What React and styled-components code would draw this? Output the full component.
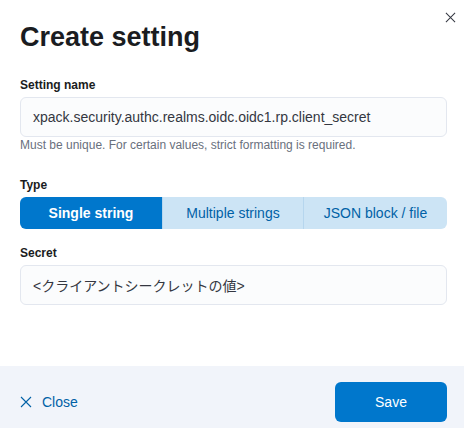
import React, { useState } from "react";
import styled, { createGlobalStyle, css } from "styled-components";

const GlobalStyle = createGlobalStyle`
  html, body {
    margin: 0;
    padding: 0;
    background: #ffffff;
    font-family: "Liberation Sans", Arial, "Noto Sans CJK JP", sans-serif;
    color: #1a1c21;
  }
  * { box-sizing: border-box; }
`;

const Flyout = styled.div`
  width: 464px;
  height: 428px;
  display: flex;
  flex-direction: column;
  position: relative;
  background: #fff;
`;

const CloseIcon = styled.button`
  position: absolute;
  top: 11px;
  right: 8px;
  width: 12px;
  height: 12px;
  padding: 0;
  border: none;
  background: none;
  color: #343741;
  display: flex;
  align-items: center;
  justify-content: center;
  cursor: pointer;
`;

const Body = styled.div`
  flex: 1;
  padding: 21px 17px 0 20px;
`;

const Title = styled.h2`
  margin: 0 0 24px;
  font-size: 27px;
  line-height: 32px;
  font-weight: 700;
  color: #1a1c21;
`;

const Field = styled.div`
  margin-bottom: ${({ $gap }) => $gap || "0"};
`;

const Label = styled.label`
  display: block;
  font-size: 12px;
  font-weight: 700;
  line-height: 16px;
  margin-bottom: 4px;
  color: #1a1c21;
`;

const Input = styled.div`
  height: 40px;
  border: 1px solid #e3e7ef;
  border-radius: 6px;
  background: #fbfcfd;
  display: flex;
  align-items: center;
  padding: 0 12px;
  font-size: 14px;
  color: #343741;
`;

const Help = styled.div`
  margin-top: 0;
  font-size: 12px;
  line-height: 16px;
  color: #69707d;
`;

const Group = styled.div`
  display: flex;
  height: 32px;
  border-radius: 6px;
  overflow: hidden;
`;

const Segment = styled.button`
  flex: ${({ $w }) => `0 0 ${$w}px`};
  border: none;
  padding: 0;
  font-family: inherit;
  font-size: 14px;
  cursor: pointer;
  ${({ $active }) =>
    $active
      ? css`
          background: #0077cc;
          color: #fff;
          font-weight: 700;
        `
      : css`
          background: #cce4f5;
          color: #0061a6;
          font-weight: 400;
        `}
  & + & {
    border-left: 1px solid #b6d6ee;
  }
`;

const Footer = styled.div`
  height: 62px;
  background: #f1f4fa;
  display: flex;
  align-items: flex-start;
  justify-content: space-between;
  padding: 16px 17px 0 20px;
`;

const TextButton = styled.button`
  height: 40px;
  display: flex;
  align-items: center;
  gap: 10px;
  border: none;
  background: none;
  padding: 0;
  font-family: inherit;
  font-size: 14px;
  color: #0061a6;
  cursor: pointer;
`;

const PrimaryButton = styled.button`
  width: 112px;
  height: 40px;
  border: none;
  border-radius: 6px;
  background: #0077cc;
  color: #fff;
  font-family: inherit;
  font-size: 14px;
  cursor: pointer;
`;

const Cross = ({ size = 12 }) => (
  <svg width={size} height={size} viewBox="0 0 12 12" fill="none">
    <path d="M1 1 L11 11 M11 1 L1 11" stroke="currentColor" strokeWidth="1.1" />
  </svg>
);

const types = [
  { id: "single", label: "Single string", w: 142 },
  { id: "multiple", label: "Multiple strings", w: 141 },
  { id: "json", label: "JSON block / file", w: 144 },
];

export default function App() {
  const [type, setType] = useState("single");
  return (
    <>
      <GlobalStyle />
      <Flyout>
        <CloseIcon aria-label="Close">
          <Cross size={11} />
        </CloseIcon>
        <Body>
          <Title>Create setting</Title>
          <Field $gap="24px">
            <Label>Setting name</Label>
            <Input>xpack.security.authc.realms.oidc.oidc1.rp.client_secret</Input>
            <Help>Must be unique. For certain values, strict formatting is required.</Help>
          </Field>
          <Field $gap="16px">
            <Label>Type</Label>
            <Group>
              {types.map((t) => (
                <Segment
                  key={t.id}
                  $w={t.w}
                  $active={type === t.id}
                  onClick={() => setType(t.id)}
                >
                  {t.label}
                </Segment>
              ))}
            </Group>
          </Field>
          <Field>
            <Label>Secret</Label>
            <Input>&lt;クライアントシークレットの値&gt;</Input>
          </Field>
        </Body>
        <Footer>
          <TextButton>
            <Cross size={12} />
            Close
          </TextButton>
          <PrimaryButton>Save</PrimaryButton>
        </Footer>
      </Flyout>
    </>
  );
}
